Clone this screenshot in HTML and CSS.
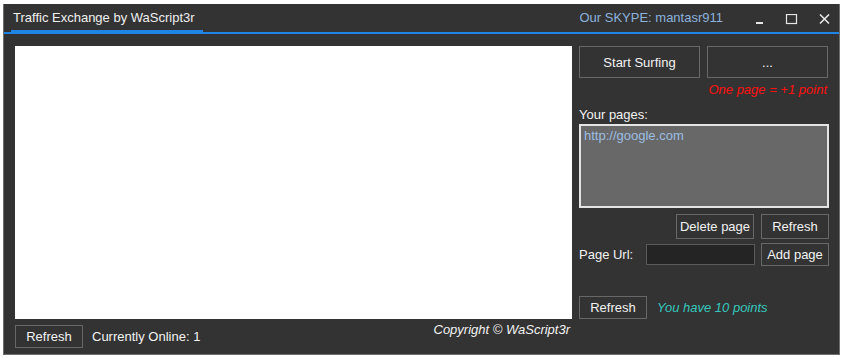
FILE: index.html
```html
<!DOCTYPE html>
<html lang="en">
<head>
  <meta charset="UTF-8">
  <meta name="viewport" content="width=device-width, initial-scale=1.0">
  <title>Traffic Exchange by WaScript3r</title>
  <link rel="stylesheet" href="styles.css">
</head>
<body>
  <div class="window">
    <div class="titlebar">
      <div class="tab">Traffic Exchange by WaScript3r</div>
      <div class="skype">Our SKYPE: mantasr911</div>
      <div class="controls">
        <svg width="30" height="12" viewBox="0 0 30 12"><rect x="1" y="8" width="7" height="2" fill="#e6e6e6"/></svg>
        <svg width="34" height="12" viewBox="0 0 34 12"><rect x="1.5" y="0.5" width="10" height="9" fill="none" stroke="#e6e6e6" stroke-width="1.2"/></svg>
        <svg width="20" height="12" viewBox="0 0 20 12"><path d="M1 0.5 L10 9.5 M10 0.5 L1 9.5" stroke="#e6e6e6" stroke-width="1.6"/></svg>
      </div>
    </div>

    <div class="content">
      <div class="left">
        <div class="browser"></div>
        <div class="statusbar">
          <button class="btn btn-small">Refresh</button>
          <span class="online">Currently Online: 1</span>
          <span class="copyright">Copyright &copy; WaScript3r</span>
        </div>
      </div>

      <div class="right">
        <div class="top-buttons">
          <button class="btn btn-big">Start Surfing</button>
          <button class="btn btn-big">...</button>
        </div>
        <div class="hint">One page = +1 point</div>
        <div class="label">Your pages:</div>
        <div class="listbox">
          <div class="item">http://google.com</div>
        </div>
        <div class="row row-end">
          <button class="btn btn-delete">Delete page</button>
          <button class="btn btn-side">Refresh</button>
        </div>
        <div class="row url-row">
          <span class="url-label">Page Url:</span>
          <input class="url-input" type="text">
          <button class="btn btn-small">Add page</button>
        </div>
        <div class="row points-row">
          <button class="btn btn-small">Refresh</button>
          <span class="points">You have 10 points</span>
        </div>
      </div>
    </div>
  </div>
</body>
</html>
```

FILE: styles.css
```css
body {
  margin: 0;
  padding: 4px 0 0 3px;
  background: #ffffff;
  font-family: "Liberation Sans", Arial, sans-serif;
  font-size: 13px;
  color: #f2f2f2;
}
.window {
  width: 835px;
  height: 350px;
  background-color: #333333;
  border: 1px solid #6e6e6e;
  border-top: none;
  display: flex;
  flex-direction: column;
}
.titlebar {
  display: flex;
  align-items: flex-end;
  height: 28px;
  border-bottom: 2px solid #1e84e6;
}
.tab {
  margin-left: 7px;
  width: 188px;
  padding: 0 2px 5px 2px;
  border-bottom: 2px solid #1e84e6;
  color: #f0f0f0;
}
.skype {
  margin-left: auto;
  color: #8cb2dc;
  padding-bottom: 7px;
}
.controls {
  display: flex;
  align-items: flex-start;
  margin-left: 32px;
  height: 18px;
}
.controls svg {
  display: block;
}
.content {
  display: flex;
  padding: 12px 10px 0 11px;
  gap: 7px;
}
.left {
  width: 557px;
  display: flex;
  flex-direction: column;
}
.browser {
  height: 273px;
  background: #ffffff;
}
.statusbar {
  display: flex;
  align-items: center;
  margin-top: 6px;
}
.btn {
  font-family: inherit;
  font-size: 13px;
  color: #f2f2f2;
  background-color: #333333;
  border: 1px solid #676767;
  padding: 0;
  margin: 0;
  cursor: pointer;
}
.btn-small {
  width: 68px;
  height: 23px;
}
.btn-big {
  width: 121px;
  height: 32px;
}
.online {
  margin-left: 9px;
}
.copyright {
  margin-left: auto;
  margin-right: 2px;
  align-self: flex-start;
  margin-top: -3px;
  font-style: italic;
}
.right {
  width: 250px;
  display: flex;
  flex-direction: column;
}
.top-buttons {
  display: flex;
  gap: 7px;
}
.hint {
  text-align: right;
  color: #ff1010;
  font-style: italic;
  margin-top: 4px;
  padding-right: 2px;
}
.label {
  margin-top: 10px;
}
.listbox {
  margin-top: 2px;
  height: 76px;
  background: #686868;
  border: 2px solid #e4e4e4;
  padding: 2px 3px;
}
.item {
  color: #9cbee2;
}
.row {
  display: flex;
  align-items: center;
}
.row-end {
  justify-content: flex-end;
  gap: 7px;
  margin-top: 6px;
}
.btn-delete {
  width: 78px;
  height: 25px;
}
.btn-side {
  width: 68px;
  height: 25px;
}
.url-row {
  margin-top: 4px;
}
.url-label {
  width: 67px;
  flex: none;
}
.url-input {
  box-sizing: border-box;
  width: 109px;
  height: 21px;
  background: #242424;
  border: 1px solid #5a5a5a;
  padding: 0 2px;
  margin: 0 6px 0 0;
  color: #f2f2f2;
}
.points-row {
  margin-top: 30px;
  gap: 10px;
}
.points {
  color: #35c8bd;
  font-style: italic;
}
```
